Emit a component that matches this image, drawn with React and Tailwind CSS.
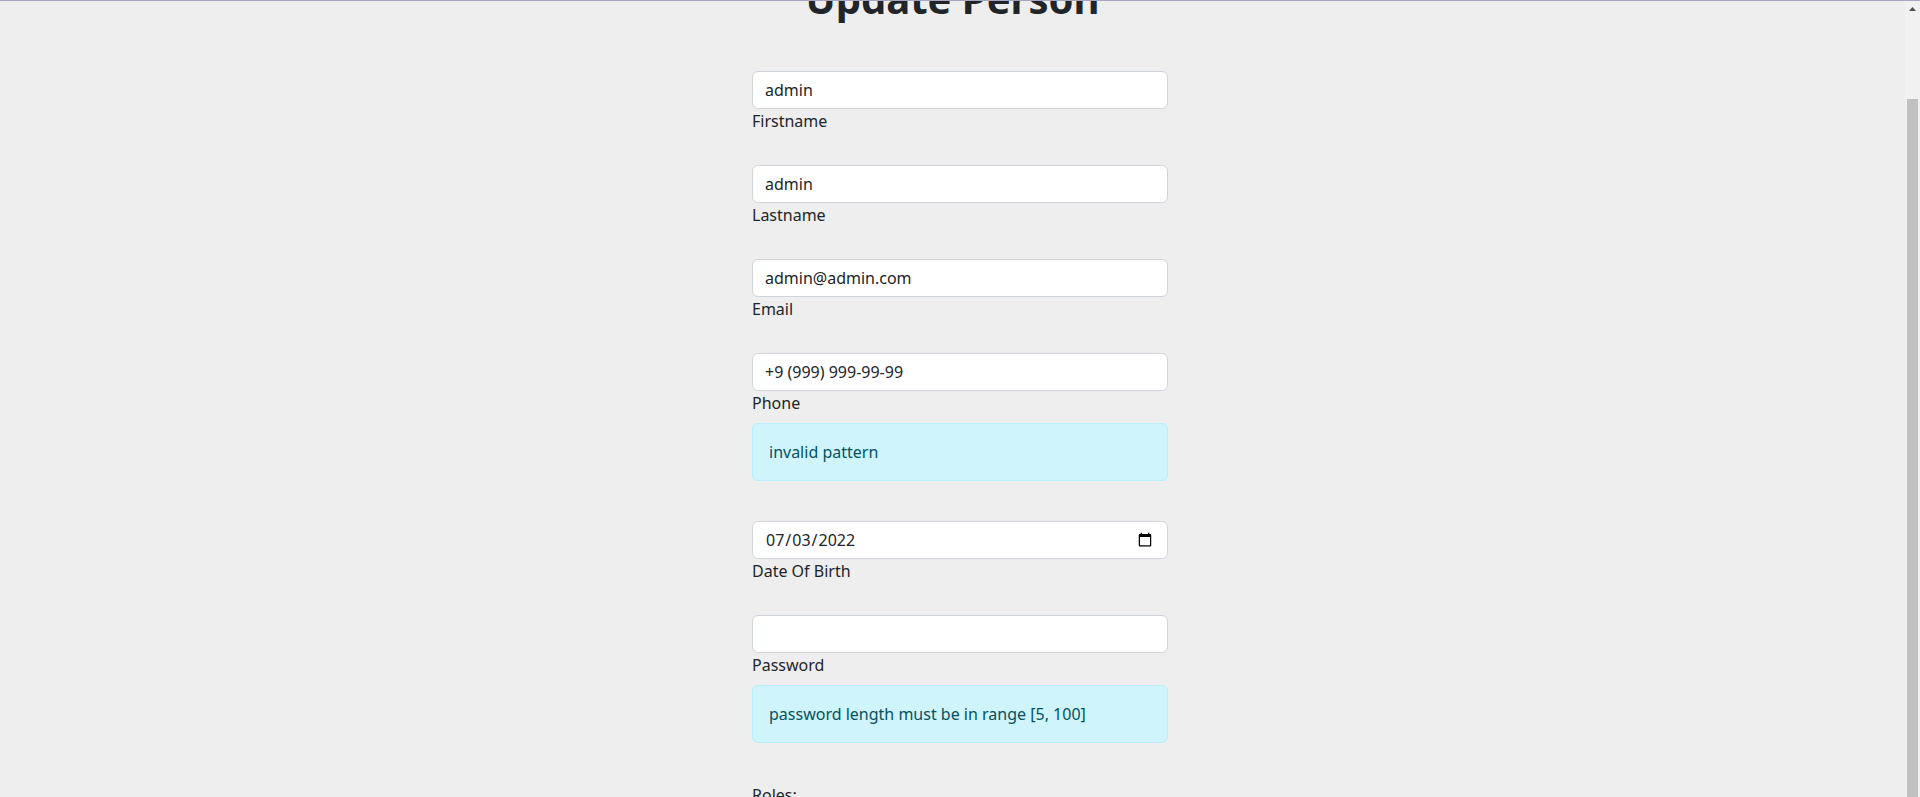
import React from "react";

function Field({ label, value, type = "text", errors = [] }) {
  return (
    <div>
      <input
        type={type}
        defaultValue={value}
        className="block w-full h-[38px] px-3 py-1.5 text-base leading-6 text-[#212529] bg-white border border-[#ced4da] rounded-md outline-none"
      />
      <label className="block text-base leading-6 text-[#212529]">{label}</label>
      <div className="pt-2 pb-6">
        {errors.map((e) => (
          <div
            key={e}
            className="mb-4 p-4 text-base leading-6 text-[#055160] bg-[#cff4fc] border border-[#b6effb] rounded-md"
          >
            {e}
          </div>
        ))}
      </div>
    </div>
  );
}

export default function App() {
  return (
    <div className="h-screen flex flex-col bg-[#eeeeee] font-['Noto_Sans',sans-serif] overflow-hidden">
      <div className="h-px bg-[#a9a5c0] shrink-0" />
      <div className="flex flex-1 min-h-0">
        <main className="flex-1 overflow-hidden">
          <h1 className="-mt-[26px] mb-[48px] text-center text-[40px] leading-[48px] font-bold text-[#212529]">
            Update Person
          </h1>
          <form className="ml-[752px] w-[416px]">
            <Field label="Firstname" value="admin" />
            <Field label="Lastname" value="admin" />
            <Field label="Email" value="admin@admin.com" type="email" />
            <Field label="Phone" value="+9 (999) 999-99-99" errors={["invalid pattern"]} />
            <Field label="Date Of Birth" value="2022-07-03" type="date" />
            <Field
              label="Password"
              value=""
              type="password"
              errors={["password length must be in range [5, 100]"]}
            />
            <label className="block text-base leading-6 text-[#212529]">Roles:</label>
          </form>
        </main>
        <div className="w-[15px] shrink-0 bg-[#f1f1f1] flex flex-col items-center">
          <div className="h-[15px] w-full flex items-center justify-center">
            <svg width="7" height="4" viewBox="0 0 7 4">
              <polygon points="0,4 3.5,0 7,4" fill="#505050" />
            </svg>
          </div>
          <div className="mt-[83px] w-[11px] flex-1 bg-[#c1c1c1]" />
        </div>
      </div>
    </div>
  );
}
